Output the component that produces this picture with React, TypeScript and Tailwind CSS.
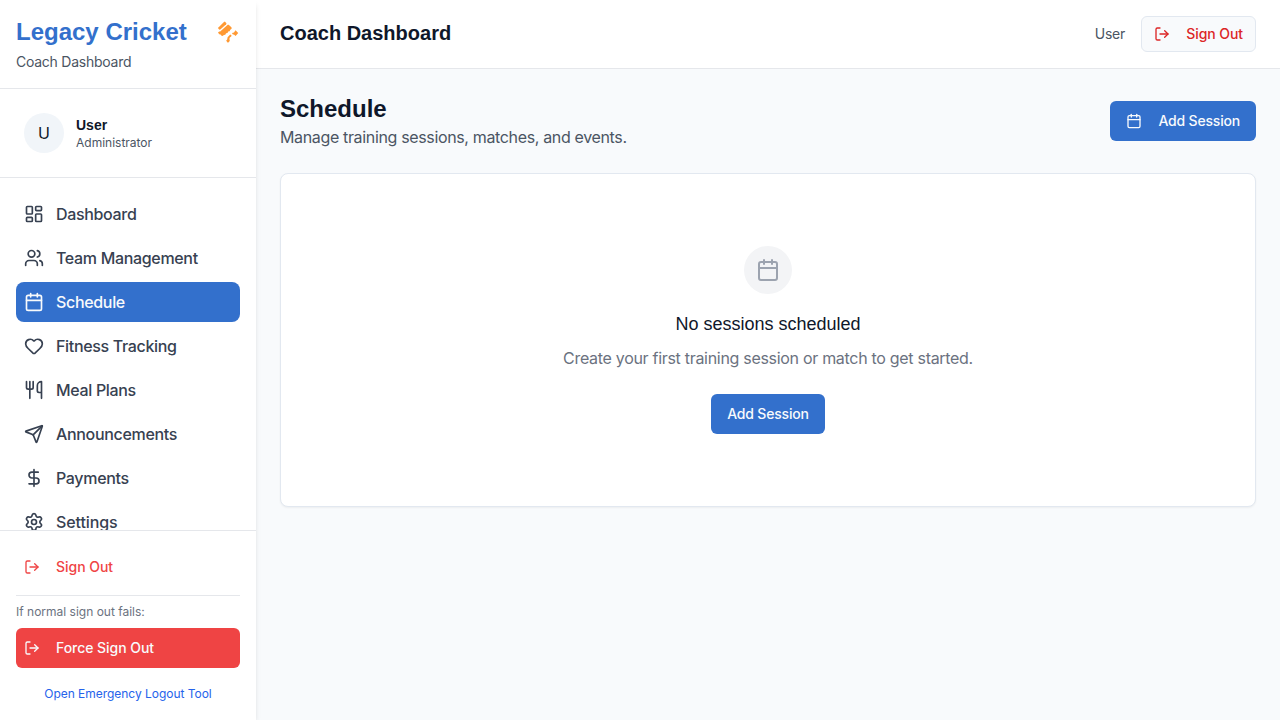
import type { ReactNode } from "react";
import {
  Calendar,
  DollarSign,
  Heart,
  LayoutDashboard,
  LogOut,
  Send,
  Settings,
  Users,
  type LucideIcon,
} from "lucide-react";

function Cutlery({ className }: { className?: string }) {
  return (
    <svg
      className={className}
      viewBox="0 0 24 24"
      fill="none"
      stroke="currentColor"
      strokeWidth="2"
      strokeLinecap="round"
      strokeLinejoin="round"
    >
      <path d="M3 2v7c0 1.1.9 2 2 2h4a2 2 0 0 0 2-2V2" />
      <path d="M7 2v20" />
      <path d="M21 15V2a5 5 0 0 0-5 5v6c0 1.1.9 2 2 2h3Zm0 0v7" />
    </svg>
  );
}

function CricketLogo() {
  return (
    <svg className="h-6 w-6 text-[#ff9933]" viewBox="0 0 24 24" fill="currentColor">
      <path d="M1.9 8 7.7 2.2 8.8 1.6 10.5 3.3 10.2 4.2 4.3 9.6 3.4 9.7Z" />
      <path d="M2 12.4 3.2 11.4 4.2 11.6 11.7 4.8 12.7 4.7 15.6 7.5 15.6 8.8 14.3 9.8 13.6 11.2 12.2 11.6 11.5 12.9 10.1 13.2 9.3 14.7 7.9 14.9 6.6 16 5.2 15.6 4.6 14.6 3.2 14.2Z" />
      <path d="M10.2 20.6 11.2 19.4 11.6 17.2 14.2 14.5 15.6 15.4 15.2 16.6 13.8 17.4 13.4 19 13.8 20.6 12.9 22.3 11.4 22.4Z" />
      <path d="M16 13.1 18 12.4 19.5 10.3 22.2 13.1 19.6 16 18.2 14.7 16.6 14.3Z" />
    </svg>
  );
}

type NavEntry = {
  label: string;
  icon: LucideIcon | typeof Cutlery;
  active?: boolean;
};

const navEntries: NavEntry[] = [
  { label: "Dashboard", icon: LayoutDashboard },
  { label: "Team Management", icon: Users },
  { label: "Schedule", icon: Calendar, active: true },
  { label: "Fitness Tracking", icon: Heart },
  { label: "Meal Plans", icon: Cutlery },
  { label: "Announcements", icon: Send },
  { label: "Payments", icon: DollarSign },
  { label: "Settings", icon: Settings },
];

function PrimaryButton({ children }: { children: ReactNode }) {
  return (
    <button className="inline-flex h-10 items-center justify-center rounded-md bg-[#3370cc] px-4 text-sm font-medium tracking-[-0.19px] text-slate-50">
      {children}
    </button>
  );
}

function Sidebar() {
  return (
    <aside className="z-10 flex h-full w-64 shrink-0 flex-col bg-white shadow-md">
      <div className="border-b border-[#e5e7eb] p-4">
        <div className="flex items-center justify-between">
          <h1 className="font-['Liberation_Sans',sans-serif] text-2xl font-bold text-[#3370cc]">Legacy Cricket</h1>
          <CricketLogo />
        </div>
        <p className="mt-1 text-sm tracking-[-0.25px] text-[#4b5563]">Coach Dashboard</p>
      </div>

      <div className="border-b border-[#e5e7eb] p-4">
        <div className="flex items-center gap-3 p-2">
          <span className="flex h-10 w-10 items-center justify-center rounded-full bg-slate-100 text-base text-[#0f172a]">
            U
          </span>
          <div>
            <p className="font-['Liberation_Sans',sans-serif] text-sm font-bold text-[#0f172a]">User</p>
            <p className="text-xs text-[#4b5563]">Administrator</p>
          </div>
        </div>
      </div>

      <nav className="min-h-0 flex-1 overflow-hidden p-4">
        <ul className="flex flex-col gap-1 tracking-[-0.33px]">
          {navEntries.map(({ label, icon: Icon, active }) => (
            <li
              key={label}
              className={
                active
                  ? "flex h-10 shrink-0 items-center gap-3 rounded-lg bg-[#3370cc] px-2 font-medium text-slate-50"
                  : "flex h-10 shrink-0 items-center gap-3 rounded-lg px-2 font-medium text-[#374151] last:tracking-[-0.1px]"
              }
            >
              <Icon className="h-5 w-5" />
              <span>{label}</span>
            </li>
          ))}
        </ul>
      </nav>

      <div className="border-t border-[#e5e7eb] px-4 pt-4 pb-[18px]">
        <button className="flex h-10 w-full items-center gap-4 rounded-md px-2 text-sm font-medium tracking-[-0.03px] text-[#ef4444]">
          <LogOut className="h-4 w-4" />
          Sign Out
        </button>
        <div className="mt-2 border-t border-[#e5e7eb] pt-2">
          <p className="mb-2 text-xs text-[#6b7280]">If normal sign out fails:</p>
          <button className="flex h-10 w-full items-center gap-4 rounded-md bg-[#ef4444] px-2 text-sm font-medium tracking-[-0.05px] text-slate-50">
            <LogOut className="h-4 w-4" />
            Force Sign Out
          </button>
          <a className="mt-[18px] block text-center text-xs tracking-[-0.03px] text-[#2563eb]">
            Open Emergency Logout Tool
          </a>
        </div>
      </div>
    </aside>
  );
}

function Header() {
  return (
    <header className="flex items-center justify-between border-b border-[#e5e7eb] bg-white px-6 py-4">
      <h1 className="pb-0.5 font-['Liberation_Sans',sans-serif] text-xl font-bold text-[#0f172a]">Coach Dashboard</h1>
      <div className="flex items-center gap-4">
        <span className="text-sm tracking-[-0.25px] text-[#4b5563]">User</span>
        <button className="flex h-9 w-[115px] items-center justify-between rounded-md border border-slate-200 bg-slate-50 px-3 text-sm font-medium tracking-[-0.08px] text-[#dc2626]">
          <LogOut className="h-4 w-4" />
          Sign Out
        </button>
      </div>
    </header>
  );
}

export default function App() {
  return (
    <div className="flex h-screen overflow-hidden bg-slate-50 font-['Inter',sans-serif] text-base">
      <Sidebar />
      <div className="flex min-w-0 flex-1 flex-col">
        <Header />
        <main className="flex flex-1 flex-col gap-6 p-6">
          <div className="flex items-center justify-between">
            <div>
              <h2 className="font-['Liberation_Sans',sans-serif] text-2xl font-bold text-[#0f172a]">Schedule</h2>
              <p className="tracking-[-0.35px] text-[#4b5563]">Manage training sessions, matches, and events.</p>
            </div>
            <PrimaryButton>
              <Calendar className="mr-4 h-4 w-4" />
              Add Session
            </PrimaryButton>
          </div>
          <section className="flex flex-col items-center rounded-lg border border-slate-200 bg-white px-6 py-[72px] shadow-xs">
            <span className="flex h-12 w-12 items-center justify-center rounded-full bg-[#f3f4f6]">
              <Calendar className="h-6 w-6 text-[#9ca3af]" />
            </span>
            <h3 className="mt-4 font-['Liberation_Sans',sans-serif] text-lg text-[#0f172a]">No sessions scheduled</h3>
            <p className="mt-2 mb-6 tracking-[-0.3px] text-[#6b7280]">
              Create your first training session or match to get started.
            </p>
            <PrimaryButton>Add Session</PrimaryButton>
          </section>
        </main>
      </div>
    </div>
  );
}
